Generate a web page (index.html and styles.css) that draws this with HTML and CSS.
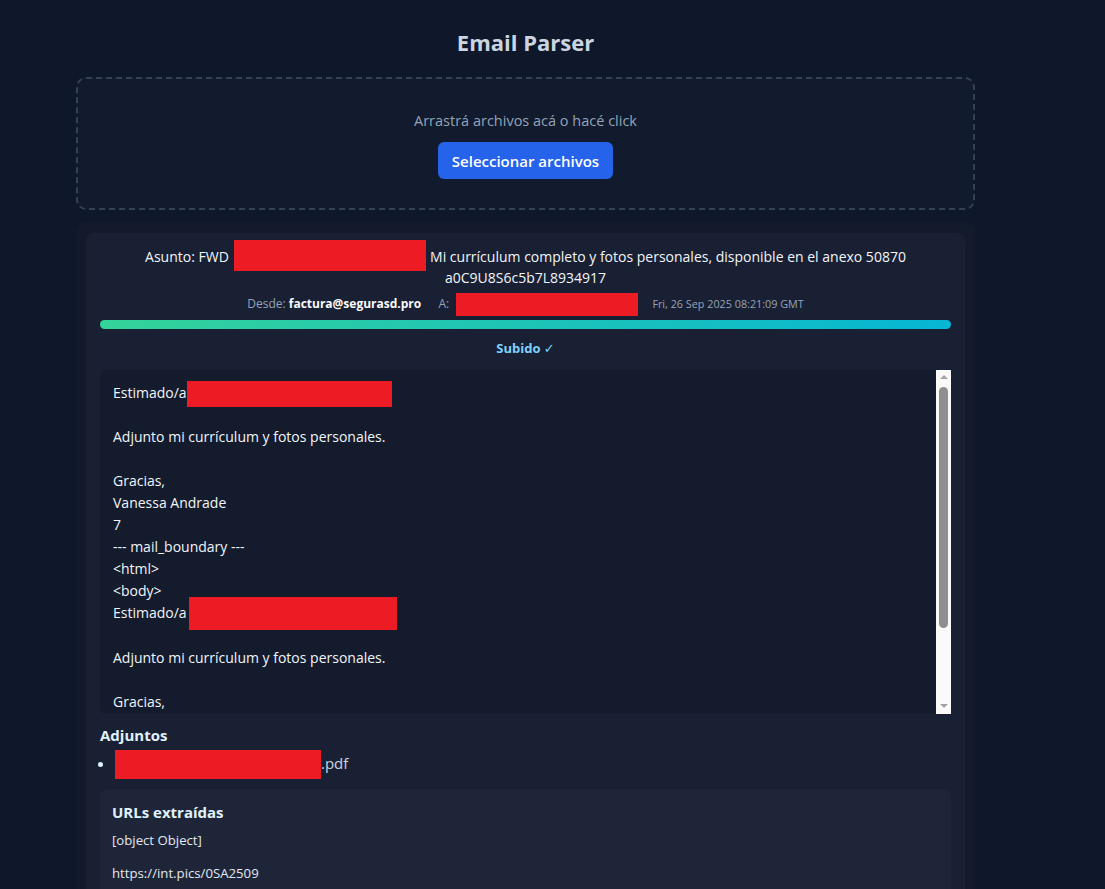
FILE: index.html
```html
<!DOCTYPE html>
<html lang="es">
<head>
<meta charset="utf-8">
<title>Email Parser</title>
<link rel="stylesheet" href="styles.css">
</head>
<body>
<main class="app">
  <h1 class="title">Email Parser</h1>
  <section class="dropzone">
    <p class="drop-hint">Arrastrá archivos acá o hacé click</p>
    <button class="btn-primary" type="button">Seleccionar archivos</button>
  </section>
  <section class="results">
    <article class="email-card">
      <div class="subject">Asunto: FWD <span class="redact redact-subject"></span> Mi currículum completo y fotos personales, disponible en el anexo 50870 a0C9U8S6c5b7L8934917</div>
      <div class="meta">
        <span class="meta-label">Desde:</span> <strong class="meta-value">factura@segurasd.pro</strong>
        <span class="meta-to"><span class="meta-label">A:</span> <span class="redact redact-to"></span></span>
        <span class="meta-date">Fri, 26 Sep 2025 08:21:09 GMT</span>
      </div>
      <div class="progress"><div class="progress-fill"></div></div>
      <div class="status">Subido <span class="check">✓</span></div>
      <div class="email-body">
        <div class="email-text">Estimado/a<span class="redact redact-name1"></span>

Adjunto mi currículum y fotos personales.

Gracias,
Vanessa Andrade
7
--- mail_boundary ---
&lt;html&gt;
&lt;body&gt;
Estimado/a<span class="redact redact-name2"></span>

Adjunto mi currículum y fotos personales.

Gracias,
Vanessa Andrade
7
&lt;/body&gt;
&lt;/html&gt;</div>
        <div class="scrollbar" aria-hidden="true">
          <span class="sb-arrow sb-up"></span>
          <span class="sb-thumb"></span>
          <span class="sb-arrow sb-down"></span>
        </div>
      </div>
      <h3 class="section-title">Adjuntos</h3>
      <ul class="attachments">
        <li><span class="redact redact-file"></span>.pdf</li>
      </ul>
      <div class="urls-card">
        <h4 class="urls-title">URLs extraídas</h4>
        <p class="url-item">[object Object]</p>
        <p class="url-item">https://int.pics/0SA2509</p>
      </div>
    </article>
  </section>
</main>
</body>
</html>
```

FILE: styles.css
```css
* { box-sizing: border-box; }
html, body { margin: 0; padding: 0; }
body {
  background: #0f172a;
  color: #e2e8f0;
  font-family: "Open Sans", "Noto Sans", sans-serif;
  overflow: hidden;
  height: 889px;
}
.app {
  width: 899px;
  margin-left: 76px;
  padding-top: 27px;
}
.title {
  margin: 0 0 20px;
  text-align: center;
  font-size: 22px;
  font-weight: 700;
  color: #cbd5e1;
  line-height: 30px;
}
.dropzone {
  height: 133px;
  border: 2px dashed #334155;
  border-radius: 10px;
  background: #121a2d;
  display: flex;
  flex-direction: column;
  align-items: center;
  padding-top: 32px;
}
.drop-hint {
  margin: 0 0 11px;
  font-size: 14.5px;
  line-height: 20px;
  color: #94a3b8;
}
.btn-primary {
  background: #2563eb;
  color: #fff;
  border: none;
  border-radius: 6px;
  font-family: inherit;
  font-size: 15px;
  font-weight: 600;
  height: 37px;
  padding: 0 14px;
}
.results {
  margin-top: 12px;
  background: #121a2c;
  border-radius: 10px;
  padding: 11px 10px 10px;
}
.email-card {
  background: #1a2033;
  border-radius: 8px;
  padding: 14px 14px 14px;
}
.subject {
  text-align: center;
  font-size: 14px;
  line-height: 19px;
  color: #f1f5f9;
  padding: 0 20px;
}
.redact {
  display: inline-block;
  background: #ed1c24;
  vertical-align: middle;
}
.redact-subject { width: 192px; height: 31px; margin: -9px 0 -3px 2px; }
.meta {
  text-align: center;
  font-size: 12px;
  line-height: 20px;
  margin-top: 7px;
  color: #f8fafc;
}
.meta-label { color: #94a3b8; }
.meta-value { font-weight: 700; }
.meta-to { margin-left: 14px; }
.redact-to { width: 182px; height: 23px; margin: -2px 0 -2px 4px; }
.meta-date { margin-left: 11px; font-size: 10.8px; color: #94a3b8; }
.progress {
  margin-top: 6px;
  height: 9px;
  border-radius: 5px;
  background: #0f172a;
  overflow: hidden;
}
.progress-fill {
  width: 100%;
  height: 100%;
  background: linear-gradient(90deg, #34d399, #06b6d4);
}
.status {
  text-align: center;
  font-size: 13px;
  font-weight: 700;
  color: #7dd3fc;
  line-height: 20px;
  height: 20px;
  margin-top: 9px;
}
.check {
  font-weight: 400;
  font-family: "DejaVu Sans", sans-serif;
  font-size: 13px;
  line-height: 0;
}
.email-body {
  margin-top: 12px;
  height: 344px;
  display: flex;
  overflow: hidden;
  background: #141b2d;
  border-radius: 6px 0 0 6px;
}
.email-text {
  flex: 1;
  overflow: hidden;
  padding: 12px 13px 12px;
  white-space: pre-wrap;
  font-size: 14px;
  line-height: 22px;
  color: #f1f5f9;
}
.redact-name1 { width: 205px; height: 26px; margin: -4px 0; }
.redact-name2 { width: 208px; height: 33px; margin: -6px 0 -5px 2px; }
.scrollbar {
  width: 15px;
  flex: none;
  background: #fafafa;
  display: flex;
  flex-direction: column;
  align-items: center;
  padding: 5px 0 6px;
}
.sb-arrow {
  width: 0;
  height: 0;
  border-left: 4px solid transparent;
  border-right: 4px solid transparent;
}
.sb-up { border-bottom: 4px solid #a3a3a3; }
.sb-down { border-top: 4px solid #a3a3a3; margin-top: auto; }
.sb-thumb {
  width: 9px;
  height: 241px;
  margin-top: 8px;
  background: #8f8f8f;
  border-radius: 5px;
}
.section-title {
  margin: 11px 0 0;
  font-size: 15px;
  font-weight: 700;
  line-height: 20px;
  color: #e0f2fe;
}
.attachments {
  margin: 7px 0 0;
  padding-left: 15px;
  font-size: 15px;
  line-height: 22px;
  color: #cbd5e1;
}
.attachments li::marker { color: #e0f2fe; }
.redact-file { width: 206px; height: 29px; margin: -4px 0 -3px; }
.urls-card {
  margin-top: 13px;
  background: #1f2538;
  border-radius: 8px;
  padding: 13px 12px 10px;
}
.urls-title {
  margin: 0 0 9px;
  font-size: 15px;
  font-weight: 700;
  line-height: 20px;
  color: #e0f2fe;
}
.url-item {
  margin: 0 0 15px;
  font-size: 13.2px;
  line-height: 18px;
  color: #e2e8f0;
}
```
